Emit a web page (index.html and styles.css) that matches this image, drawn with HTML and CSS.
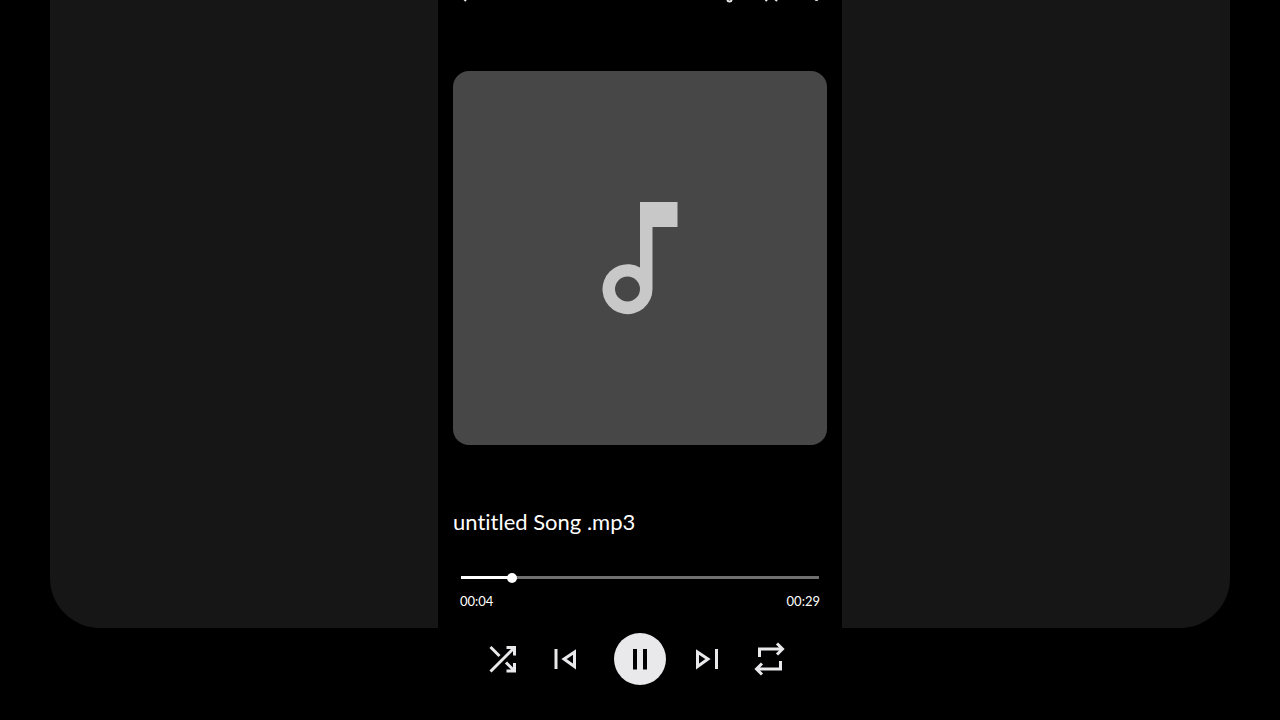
FILE: index.html
```html
<!DOCTYPE html>
<html lang="en">
  <head>
    <meta charset="utf-8">
    <meta name="viewport" content="width=device-width, initial-scale=1">
    <title>untitled Song .mp3</title>
    <link rel="stylesheet" href="styles.css">
  </head>
  <body>
    <div class="stage">
      <div class="backdrop"></div>
      <main class="player">
        <header class="toolbar">
          <button class="tool" aria-label="Back">
            <svg viewBox="0 0 24 4"><path d="M11-1l2 2"/></svg>
          </button>
          <div class="tools">
            <button class="tool" aria-label="Cast">
              <svg viewBox="0 0 24 4"><path d="M12.500-.500a2 2 0 0 0 4 0"/></svg>
            </button>
            <button class="tool" aria-label="Favorite">
              <svg viewBox="0 0 24 4"><path d="M6.500 1l2-2M18 1l-2-2"/></svg>
            </button>
            <button class="tool" aria-label="More">
              <svg viewBox="0 0 24 4"><circle cx="13.500" cy="-1" r="1"/></svg>
            </button>
          </div>
        </header>
        <div class="artwork">
          <svg viewBox="0 0 76 114">
            <path fill-rule="evenodd" d="M38 1h37.500v25H50.500v62A25 25 0 1 1 38 66.500zM25.500 75.500a12.500 12.500 0 1 0 0 25a12.500 12.500 0 1 0 0-25z"/>
          </svg>
        </div>
        <h1 class="title">untitled Song .mp3</h1>
        <div class="progress">
          <input class="seek" type="range" min="0" max="29" step="0.1" value="3.8" aria-label="Seek">
          <div class="times">
            <span>00:04</span>
            <span>00:29</span>
          </div>
        </div>
        <div class="controls">
          <button class="control" aria-label="Shuffle">
            <svg viewBox="0 0 40 52"><path d="M4.500 38.500L28 15M4.500 14l9 9M20 29.500l8 8M20.500 14.500H28.500v8M28.500 30v8h-8"/></svg>
          </button>
          <button class="control" aria-label="Previous">
            <svg viewBox="0 0 40 52"><path d="M6 16v20M24.500 19v14.500L14 26z"/></svg>
          </button>
          <button class="control play" aria-label="Pause">
            <svg viewBox="0 0 52 52"><path d="M21 16v20.500M31 16v20.500"/></svg>
          </button>
          <button class="control" aria-label="Next">
            <svg viewBox="0 0 40 52"><path d="M26.500 16v20M7.500 19v14.500L18 26z"/></svg>
          </button>
          <button class="control" aria-label="Repeat">
            <svg viewBox="0 0 40 52"><path d="M5.500 24v-8H28M23 10.500l5.500 5.500l-5.500 5.500M26.500 28v8H3M8 30.500L2.500 36L8 41.500"/></svg>
          </button>
        </div>
      </main>
    </div>
  </body>
</html>
```
FILE: styles.css
```css
body {
  --backdrop-color: #161616;
  --artwork-color: #474747;
  --note-color: #c8c8c8;
  --icon-color: #e9e9eb;
  margin: 0;
  background-color: black;
  color: white;
  font-family: Lato, "Liberation Sans", sans-serif;
  font-variant-ligatures: none;
}

button {
  padding: 0;
  border: none;
  background-color: transparent;
  color: var(--icon-color);
  cursor: pointer;
}

svg {
  display: block;
  fill: none;
  stroke: currentColor;
}

/* the backdrop and the player share one grid cell */
.stage {
  display: grid;
  min-height: 100vh;
}

.backdrop,
.player {
  grid-area: 1 / 1;
}

.backdrop {
  margin: 0 50px 92px;
  border-radius: 0 0 50px 50px;
  background-color: var(--backdrop-color);
}

.player {
  box-sizing: border-box;
  width: 100%;
  max-width: 404px;
  margin: 0 auto;
  padding: 0 15px 32px;
  background-color: black;
}

.toolbar {
  display: flex;
  justify-content: space-between;
  height: 4px;
  overflow: hidden;
}

.tools {
  display: flex;
  gap: 20px;
}

.tool {
  width: 24px;
  height: 4px;
}

.tool svg {
  stroke-width: 2;
}

.artwork {
  display: flex;
  align-items: center;
  justify-content: center;
  aspect-ratio: 1;
  margin-top: 67px;
  border-radius: 16px;
  background-color: var(--artwork-color);
}

.artwork svg {
  width: 76px;
  fill: var(--note-color);
  stroke: none;
}

.title {
  margin: 63px 0 0;
  font-size: 22px;
  font-weight: 400;
  line-height: 28px;
}

.progress {
  margin-top: 35px;
  padding: 0 7px;
}

.seek {
  display: block;
  appearance: none;
  width: calc(100% - 2px);
  height: 13px;
  margin: 0 1px;
  background: linear-gradient(to right, white 14%, #707070 14%) center / 100% 3px no-repeat;
}

.seek::-webkit-slider-thumb {
  appearance: none;
  width: 10px;
  height: 10px;
  border-radius: 50%;
  background-color: white;
}

.times {
  display: flex;
  justify-content: space-between;
  margin-top: 9px;
  font-size: 13px;
  line-height: 16px;
}

.controls {
  display: flex;
  justify-content: center;
  gap: 24px;
  margin-top: 24px;
}

.control {
  width: 40px;
  height: 52px;
}

.control svg {
  stroke-width: 3;
}

.play {
  width: 52px;
  border-radius: 50%;
  background-color: var(--icon-color);
  color: black;
}

.play svg {
  stroke-width: 4;
}
```
